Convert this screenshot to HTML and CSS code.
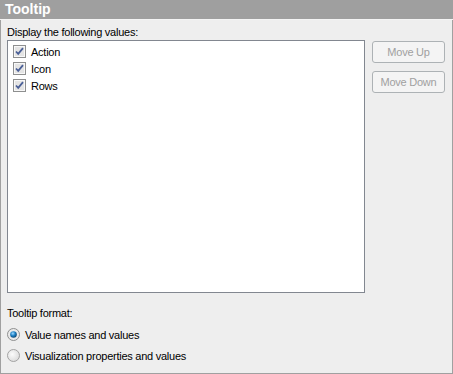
FILE: index.html
```html
<!DOCTYPE html>
<html lang="en">

<head>
  <meta charset="UTF-8" />
  <title>Tooltip</title>
  <link rel="stylesheet" href="styles.css">
</head>

<body>
  <div class="panel">
    <div class="panel_header">Tooltip</div>

    <div class="panel_body">
      <div class="field_label">Display the following values:</div>

      <div class="values_row">
        <ul class="values_list">
          <li class="value_item">
            <svg class="check" width="13" height="13" viewBox="0 0 13 13">
              <rect x="0.5" y="0.5" width="12" height="12" fill="#f4f4f4" stroke="#8e8f8f" />
              <rect x="1.5" y="1.5" width="10" height="10" fill="#e4e4e4" stroke="#f8f8f8" />
              <path d="M3 6.5 L5.2 8.8 L10 3.2" fill="none" stroke="#4a5f97" stroke-width="1.8" />
            </svg>
            <span>Action</span>
          </li>
          <li class="value_item">
            <svg class="check" width="13" height="13" viewBox="0 0 13 13">
              <rect x="0.5" y="0.5" width="12" height="12" fill="#f4f4f4" stroke="#8e8f8f" />
              <rect x="1.5" y="1.5" width="10" height="10" fill="#e4e4e4" stroke="#f8f8f8" />
              <path d="M3 6.5 L5.2 8.8 L10 3.2" fill="none" stroke="#4a5f97" stroke-width="1.8" />
            </svg>
            <span>Icon</span>
          </li>
          <li class="value_item">
            <svg class="check" width="13" height="13" viewBox="0 0 13 13">
              <rect x="0.5" y="0.5" width="12" height="12" fill="#f4f4f4" stroke="#8e8f8f" />
              <rect x="1.5" y="1.5" width="10" height="10" fill="#e4e4e4" stroke="#f8f8f8" />
              <path d="M3 6.5 L5.2 8.8 L10 3.2" fill="none" stroke="#4a5f97" stroke-width="1.8" />
            </svg>
            <span>Rows</span>
          </li>
        </ul>

        <div class="btn_grp">
          <button class="move_btn" disabled>Move Up</button>
          <button class="move_btn" disabled>Move Down</button>
        </div>
      </div>

      <div class="field_label format_label">Tooltip format:</div>

      <label class="radio_row first_radio">
        <svg class="radio" width="13" height="13" viewBox="0 0 13 13">
          <defs>
            <radialGradient id="dotFill" cx="0.4" cy="0.35" r="0.7">
              <stop offset="0" stop-color="#9fd9ff" />
              <stop offset="0.5" stop-color="#1a7fc4" />
              <stop offset="1" stop-color="#0f3f66" />
            </radialGradient>
          </defs>
          <circle cx="6.5" cy="6.5" r="6" fill="#eaeaea" stroke="#8e8f8f" />
          <circle cx="6.5" cy="6.5" r="3.3" fill="url(#dotFill)" />
        </svg>
        <span>Value names and values</span>
      </label>

      <label class="radio_row">
        <svg class="radio" width="13" height="13" viewBox="0 0 13 13">
          <defs>
            <radialGradient id="emptyFill" cx="0.4" cy="0.4" r="0.7">
              <stop offset="0" stop-color="#fbfbfb" />
              <stop offset="1" stop-color="#d8d8d8" />
            </radialGradient>
          </defs>
          <circle cx="6.5" cy="6.5" r="6" fill="url(#emptyFill)" stroke="#a3a3a3" />
        </svg>
        <span>Visualization properties and values</span>
      </label>
    </div>
  </div>
</body>

</html>
```

FILE: styles.css
```css
body {
  margin: 0;
  font-family: 'Liberation Sans', Arial, sans-serif;
  font-size: 11px;
  letter-spacing: -0.25px;
  color: #000;
}

.panel {
  width: 453px;
  height: 374px;
  box-sizing: border-box;
  background-color: #eeeeee;
  border: 1px solid #a0a0a0;
  border-top: 0;
}

.panel_header {
  height: 19px;
  margin: 0 -1px;
  padding-left: 5px;
  background-color: #9f9f9f;
  border-bottom: 1px solid #f4f4f4;
  color: #fff;
  font-size: 14px;
  font-weight: bold;
  letter-spacing: 0;
  line-height: 19px;
}

.panel_body {
  padding: 5px 0 0 6px;
}

.field_label {
  height: 15px;
  line-height: 15px;
}

.values_row {
  display: flex;
  gap: 7px;
}

.values_list {
  width: 358px;
  height: 253px;
  box-sizing: border-box;
  margin: 0;
  padding: 2px 0 0 5px;
  list-style: none;
  background: #fff;
  border: 1px solid #828790;
}

.value_item {
  display: flex;
  align-items: center;
  gap: 5px;
  height: 17px;
}

.check {
  display: block;
}

.btn_grp {
  display: flex;
  flex-direction: column;
  gap: 8px;
  padding-top: 1px;
}

.move_btn {
  width: 73px;
  height: 22px;
  padding: 0;
  font-family: inherit;
  font-size: 11px;
  letter-spacing: -0.25px;
  color: #a0a0a0;
  background: #f4f4f4;
  border: 1px solid #adb2b5;
  border-radius: 3px;
}

.format_label {
  margin-top: 13px;
}

.radio_row {
  display: flex;
  align-items: center;
  gap: 5px;
  height: 19px;
  margin-top: 2px;
}

.radio_row.first_radio {
  margin-top: 4px;
}

.radio {
  display: block;
}
```
